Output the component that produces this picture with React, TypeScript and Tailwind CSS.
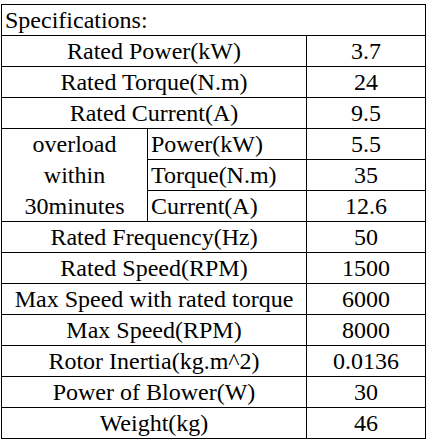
const mainRows = [
  { label: "Rated Power(kW)", value: "3.7" },
  { label: "Rated Torque(N.m)", value: "24" },
  { label: "Rated Current(A)", value: "9.5" },
];

const overloadRows = [
  { label: "Power(kW)", value: "5.5" },
  { label: "Torque(N.m)", value: "35" },
  { label: "Current(A)", value: "12.6" },
];

const tailRows = [
  { label: "Rated Frequency(Hz)", value: "50" },
  { label: "Rated Speed(RPM)", value: "1500" },
  { label: "Max Speed with rated torque", value: "6000" },
  { label: "Max Speed(RPM)", value: "8000" },
  { label: "Rotor Inertia(kg.m^2)", value: "0.0136" },
  { label: "Power of Blower(W)", value: "30" },
  { label: "Weight(kg)", value: "46" },
];

const cell = "border-r border-b border-black h-[31px] leading-[30px] whitespace-nowrap";

function T({ children }: { children: React.ReactNode }) {
  return <span className="text-[24px] text-black font-['Liberation_Serif']">{children}</span>;
}

export default function App() {
  return (
    <div className="bg-white pt-[4px] pl-[1px] pb-[3px]">
      <div className="grid grid-cols-[146px_159px_119px] auto-rows-[31px] w-[425px] border-l border-t border-black">
        <div className={`${cell} col-span-3 pl-[3px]`}><T>Specifications:</T></div>

        {mainRows.map((r) => (
          <div key={r.label} className="contents">
            <div className={`${cell} col-span-2 text-center`}><T>{r.label}</T></div>
            <div className={`${cell} text-center`}><T>{r.value}</T></div>
          </div>
        ))}

        {/* overload block */}
        <div className="row-span-3 border-r border-b border-black flex flex-col items-center leading-[31px]">
          <T>overload</T>
          <T>within</T>
          <T>30minutes</T>
        </div>
        {overloadRows.map((r) => (
          <div key={r.label} className="contents">
            <div className={`${cell} pl-[3px]`}><T>{r.label}</T></div>
            <div className={`${cell} text-center`}><T>{r.value}</T></div>
          </div>
        ))}

        {tailRows.map((r) => (
          <div key={r.label} className="contents">
            <div className={`${cell} col-span-2 text-center`}><T>{r.label}</T></div>
            <div className={`${cell} text-center`}><T>{r.value}</T></div>
          </div>
        ))}
      </div>
    </div>
  );
}
